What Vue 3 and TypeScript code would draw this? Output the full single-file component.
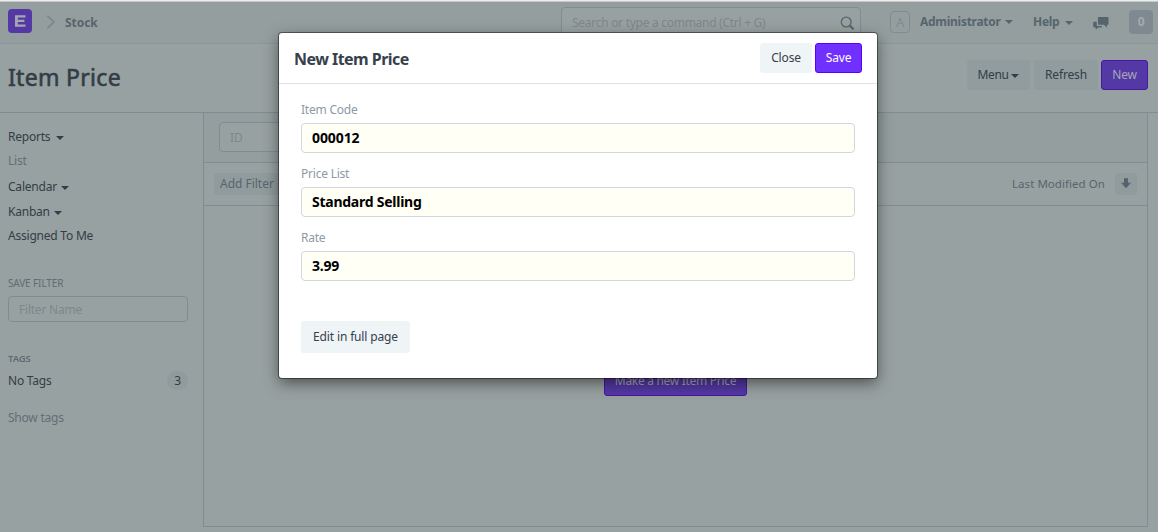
<script setup lang="ts">
interface View { label: string; caret: boolean; muted?: boolean; cls: string }
interface Field { label: string; value: string; cls: string }

const views: View[] = [
  { label: 'Reports', caret: true, cls: 'reports' },
  { label: 'List', caret: false, muted: true, cls: 'list' },
  { label: 'Calendar', caret: true, cls: 'calendar' },
  { label: 'Kanban', caret: true, cls: 'kanban' },
  { label: 'Assigned To Me', caret: false, cls: 'assigned' },
]
const fields: Field[] = [
  { label: 'Item Code', value: '000012', cls: 'code' },
  { label: 'Price List', value: 'Standard Selling', cls: 'price' },
  { label: 'Rate', value: '3.99', cls: 'rate' },
]
</script>

<template>
  <div class="desk">
    <div class="strip"></div>
    <header class="navbar">
      <div class="logo">
        <svg width="24" height="24" viewBox="0 0 24 24"><path d="M7 6.200h10.500v2.300H9.800v2.300h6.600v2.200H9.800v2.400h7.700v2.400H7z" fill="#a3a7ad" /></svg>
      </div>
      <svg class="chevron" width="10" height="14" viewBox="0 0 10 14"><path d="M1.300 .8l6.600 6.200-6.600 6.200" fill="none" stroke="#7c898f" stroke-width="1.900" /></svg>
      <span class="crumb">Stock</span>
      <div class="search">
        <span>Search or type a command (Ctrl + G)</span>
        <svg width="15" height="15" viewBox="0 0 15 15"><circle cx="6.200" cy="6" r="4.900" fill="none" stroke="#56646d" stroke-width="1.300" /><path d="M9.700 9.500l3.800 3.800" stroke="#56646d" stroke-width="2.200" /></svg>
      </div>
      <span class="avatar">A</span>
      <span class="nav-item admin">Administrator</span><i class="caret nc1"></i>
      <span class="nav-item help">Help</span><i class="caret nc2"></i>
      <svg class="chat" width="16" height="14" viewBox="0 0 16 14"><path d="M5 0h9.600q.9 0 .9.900v6q0 .9-.9.900H14v3l-3-3H5.800q-.8 0-.8-.8z" fill="#56656d" /><path d="M1 4.700h2.800v3.200q0 1.200 1.200 1.200h4v.5q0 .8-.8.800H5L2.700 13v-2.600H1q-.8 0-.8-.8V5.500q0-.8.8-.8z" fill="#56656d" /></svg>
      <span class="count">0</span>
    </header>

    <section class="page-head">
      <h1>Item Price</h1>
      <div class="actions">
        <button class="btn dim menu"><span>Menu</span><i class="caret"></i></button>
        <button class="btn dim refresh">Refresh</button>
        <button class="btn dim-primary">New</button>
      </div>
    </section>

    <main class="body">
      <aside class="sidebar">
        <div v-for="v in views" :key="v.label" class="view" :class="[v.cls, { muted: v.muted }]">
          <span>{{ v.label }}</span><i v-if="v.caret" class="caret"></i>
        </div>
        <div class="heading save-heading">SAVE FILTER</div>
        <div class="filter-name">Filter Name</div>
        <div class="heading tags-heading">TAGS</div>
        <div class="tag-row"><span>No Tags</span><span class="badge">3</span></div>
        <div class="show-tags">Show tags</div>
      </aside>
      <section class="results">
        <div class="filters"><div class="id-input">ID</div></div>
        <div class="sortbar">
          <span class="add-filter">Add Filter</span>
          <span class="sort-label">Last Modified On</span>
          <span class="sort-dir"><svg width="10" height="11" viewBox="0 0 10 11"><path d="M3 .3h4v4.400h3L5 10.300 0 4.700h3z" fill="#53626c" /></svg></span>
        </div>
        <div class="empty"><button class="btn dim-primary make">Make a new Item Price</button></div>
      </section>
    </main>

    <div class="modal">
      <div class="modal-head">
        <h2>New Item Price</h2>
        <button class="btn light close">Close</button>
        <button class="btn primary">Save</button>
      </div>
      <div class="modal-body">
        <div v-for="f in fields" :key="f.label" class="field" :class="f.cls">
          <label>{{ f.label }}</label>
          <div class="control"><span>{{ f.value }}</span></div>
        </div>
        <button class="btn light edit">Edit in full page</button>
      </div>
    </div>
  </div>
</template>

<style>
body { margin: 0; overflow: hidden; }
</style>

<style scoped>
* { box-sizing: border-box; }
.desk { position: relative; width: 1158px; height: 532px; overflow: hidden; background: #98a1a1; color: #323d46; font: 12px/16px "Noto Sans", "Open Sans", sans-serif; letter-spacing: -0.22px; white-space: nowrap; }
.strip { height: 2px; background: #ececeb; border-bottom: 1px solid #c7c9c8; }
.navbar { height: 42px; background: #949e9f; border-bottom: 1px solid #8b9799; display: flex; align-items: flex-start; color: #56656d; }
.logo { width: 24px; height: 24px; margin: 7px 0 0 8px; border-radius: 4px; background: #5438a5; }
.chevron { margin: 13px 0 0 14px; }
.crumb { width: 42px; margin: 13px 0 0 9px; font-weight: 700; letter-spacing: -0.05px; }
.search { width: 300px; height: 32px; margin: 5px 0 0 454px; border: 1px solid #7e8e90; border-radius: 4px; background: #98a1a1; padding: 7px 5px 0 10px; display: flex; justify-content: space-between; color: #7c888b; letter-spacing: -0.28px; }
.search svg { margin-top: 1px; }
.avatar { width: 20px; height: 22px; margin: 9px 0 0 29px; border: 1px solid #7f8d90; border-radius: 4px; text-align: center; line-height: 21px; font-size: 13px; color: #7f8b8e; }
.nav-item { margin-top: 12px; font-weight: 700; }
.admin { width: 80px; margin-left: 10px; letter-spacing: -0.28px; }
.help { width: 27px; margin-left: 20px; letter-spacing: -0.3px; }
.caret { display: block; width: 0; height: 0; border: 4px solid transparent; border-top-color: currentColor; border-bottom: 0; }
.nc1 { margin: 18px 0 0 5px; }
.nc2 { margin: 19px 0 0 5px; }
.chat { margin: 15px 0 0 20px; }
.count { width: 24px; height: 24px; margin: 8px 0 0 20px; border-radius: 4px; background: #7f8992; color: #a4abac; font-weight: 700; font-size: 12px; line-height: 23px; text-align: center; }
.page-head { height: 69px; padding: 16px 10px 0 8px; border-bottom: 1px solid #7e8e90; display: flex; justify-content: space-between; }
h1 { margin: 1px 0 0; font: 400 23px/32px "Noto Sans", sans-serif; letter-spacing: 0.3px; -webkit-text-stroke: 0.6px currentColor; }
.actions { display: flex; gap: 4px; }
.btn { height: 30px; padding: 0 0 1px; border: 1px solid transparent; border-radius: 3px; font: 12px/26px "Noto Sans", sans-serif; letter-spacing: -0.15px; color: inherit; text-align: center; white-space: nowrap; }
.dim { background: #919c9e; }
.menu { width: 63px; display: flex; align-items: center; justify-content: center; gap: 3px; letter-spacing: -0.4px; }
.menu .caret { margin-top: 3px; }
.refresh { width: 64px; margin-right: -1px; }
.dim-primary { width: 47px; background: #5438a5; border-color: #45199f; color: #a8a8b6; }
.body { display: flex; height: 414px; }
.sidebar { width: 203px; padding: 16px 15px 0 8px; }
.view { display: flex; gap: 5px; height: 16px; }
.view .caret { margin-top: 7px; }
.reports .caret { margin-left: 1px; }
.calendar .caret, .kanban .caret { margin-left: -1px; }
.list { margin-top: 8px; }
.calendar { margin-top: 10px; }
.kanban { margin-top: 9px; }
.assigned { margin-top: 8px; }
.muted, .show-tags { color: #616f77; }
.heading { height: 14px; font-size: 10px; line-height: 14px; color: #5e6b73; letter-spacing: -0.08px; }
.save-heading { margin-top: 32px; letter-spacing: -0.12px; }
.filter-name { height: 26px; margin-top: 6px; padding: 5px 10px; border: 1px solid #7e8e90; border-radius: 4px; color: #7c888b; }
.tags-heading { margin-top: 30px; font-size: 9.500px; font-weight: 600; }
.tag-row { margin-top: 5px; height: 19px; display: flex; justify-content: space-between; align-items: center; }
.badge { width: 21px; height: 19px; border-radius: 10px; background: #8f9b9c; text-align: center; line-height: 19px; }
.show-tags { margin-top: 20px; }
.results { width: 945px; border: 1px solid #7e8e90; border-top: 0; }
.filters { height: 50px; padding: 9px 15px; background: #949e9f; border-bottom: 1px solid #7e8e90; }
.id-input { width: 150px; height: 30px; padding: 7px 10px; border: 1px solid #7e8e90; border-radius: 4px; background: #98a1a1; color: #7c888b; letter-spacing: 0; }
.sortbar { height: 43px; padding: 10px 10px 0; display: flex; border-bottom: 1px solid #7e8e90; color: #56656d; }
.add-filter { width: 70px; height: 22px; padding-left: 6px; line-height: 21px; border-radius: 3px; background: #909b9d; letter-spacing: -0.02px; }
.sort-label { width: 93px; margin-left: 728px; line-height: 22px; font-size: 11.500px; letter-spacing: 0.05px; }
.sort-dir { width: 22px; height: 22px; margin-left: 10px; border-radius: 3px; background: #8f9b9c; display: flex; justify-content: center; padding-top: 5px; }
.empty { padding: 160px 0 0 400px; }
.make { display: block; width: 143px; letter-spacing: -0.3px; }
.modal { position: absolute; left: 279px; top: 33px; width: 598px; height: 345px; background: #fff; border-radius: 3px; box-shadow: 0 0 0 1px rgba(0, 0, 0, .43), 0 5px 15px rgba(0, 0, 0, .5); color: #36414c; }
.modal-head { height: 51px; padding: 10px 15px 0; display: flex; border-bottom: 1px solid #dfe2e5; }
h2 { margin: 4px 0 0; flex: 1; font: 700 16px/24px "Noto Sans", sans-serif; letter-spacing: -0.53px; }
.light { background: #eff4f7; color: #36414c; }
.close { width: 52px; margin-right: 3px; }
.primary { width: 47px; background: #7030ff; border-color: #5b00ff; color: #fff; }
.modal-body { padding: 18px 22px; }
.field { height: 64px; }
.field label { display: block; height: 21px; line-height: 16px; color: #8d99a6; }
.control { height: 30px; padding: 4px 10px; border: 1px solid #d1d8dd; border-radius: 4px; background: #fffff5; color: #000; font-weight: 700; font-size: 14px; line-height: 20px; letter-spacing: -0.25px; }
.code .control { letter-spacing: -0.1px; }
.edit { width: 109px; height: 32px; margin-top: 27px; line-height: 28px; }
</style>
